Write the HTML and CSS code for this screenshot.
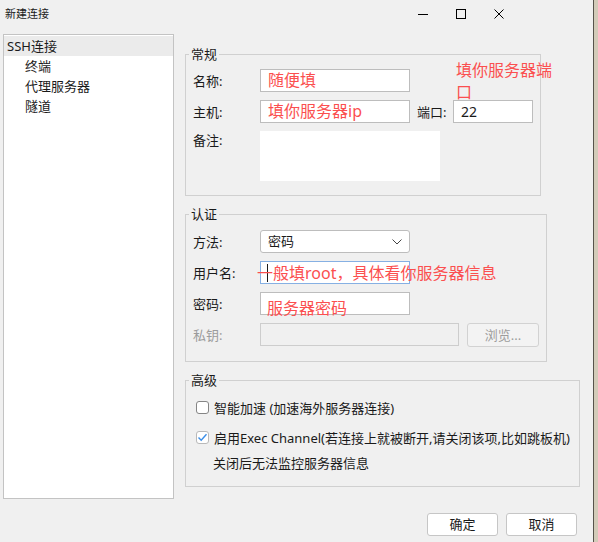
FILE: index.html
```html
<!DOCTYPE html>
<html lang="zh-CN">
<head>
<meta charset="utf-8">
<title>新建连接</title>
<link rel="stylesheet" href="styles.css">
</head>
<body>
<div class="window">
  <div class="dialog">
    <div class="titlebar">
      <span class="title">新建连接</span>
      <div class="caption">
        <span class="cap"><svg width="10" height="10" viewBox="0 0 10 10"><path d="M0 5.5H10" stroke="#000" stroke-width="1"/></svg></span>
        <span class="cap"><svg width="10" height="10" viewBox="0 0 10 10"><rect x="0.5" y="0.5" width="9" height="9" fill="none" stroke="#000" stroke-width="1"/></svg></span>
        <span class="cap"><svg width="10" height="10" viewBox="0 0 10 10"><path d="M0.5 0.5L9.5 9.5M9.5 0.5L0.5 9.5" stroke="#000" stroke-width="1"/></svg></span>
      </div>
    </div>

    <div class="body">
      <ul class="tree">
        <li class="sel">SSH连接</li>
        <li class="child">终端</li>
        <li class="child">代理服务器</li>
        <li class="child">隧道</li>
      </ul>

      <div class="pane">
        <fieldset class="group g-general">
          <legend>常规</legend>
          <div class="row rel">
            <span class="lbl">名称:</span>
            <div class="field w150 red">随便填</div>
            <span class="note note-port">填你服务器端口</span>
          </div>
          <div class="row">
            <span class="lbl">主机:</span>
            <div class="field w150 red">填你服务器ip</div>
            <span class="lbl-port">端口:</span>
            <div class="field w80 num">22</div>
          </div>
          <div class="row top">
            <span class="lbl lbl-top">备注:</span>
            <div class="memo"></div>
          </div>
        </fieldset>

        <fieldset class="group g-auth">
          <legend>认证</legend>
          <div class="row">
            <span class="lbl">方法:</span>
            <div class="field w150 select">
              <span>密码</span>
              <svg class="chev" width="10" height="6" viewBox="0 0 10 6"><path d="M0.5 0.5L5 5L9.5 0.5" fill="none" stroke="#444" stroke-width="1"/></svg>
            </div>
          </div>
          <div class="row rel">
            <span class="lbl">用户名:</span>
            <div class="field w150 focus"><span class="caret"></span></div>
            <span class="note note-user">一般填root，具体看你服务器信息</span>
          </div>
          <div class="row rel">
            <span class="lbl">密码:</span>
            <div class="field w150"></div>
            <span class="note note-pass">服务器密码</span>
          </div>
          <div class="row">
            <span class="lbl dim">私钥:</span>
            <div class="field w199 off"></div>
            <div class="btn-browse">浏览...</div>
          </div>
        </fieldset>

        <fieldset class="group g-adv">
          <legend>高级</legend>
          <label class="check">
            <span class="box"></span>
            <span>智能加速 (加速海外服务器连接)</span>
          </label>
          <label class="check second">
            <span class="box on"><svg width="11" height="11" viewBox="0 0 11 11"><path d="M1.5 5.5L4.2 8.3L9.5 2.2" fill="none" stroke="#3b8ee8" stroke-width="1.4"/></svg></span>
            <span>启用Exec Channel(若连接上就被断开,请关闭该项,比如跳板机)</span>
          </label>
          <div class="hint">关闭后无法监控服务器信息</div>
        </fieldset>
      </div>
    </div>

    <div class="footer">
      <button class="btn">确定</button>
      <button class="btn">取消</button>
    </div>
  </div>
  <div class="edge"></div>
  <div class="backdrop"></div>
</div>
</body>
</html>
```

FILE: styles.css
```css
html, body {
  margin: 0;
  padding: 0;
}

body {
  width: 598px;
  height: 542px;
  overflow: hidden;
  background: #f0f0f0;
  font-family: "Noto Sans", "Noto Sans CJK SC", sans-serif;
  font-size: 13px;
  color: #1a1a1a;
}

.window {
  display: flex;
  height: 542px;
}

.dialog {
  width: 593px;
  display: flex;
  flex-direction: column;
}

.edge {
  width: 1px;
  background: #57534b;
}

.backdrop {
  flex: 1;
  background: #d3cbb9;
}

/* title bar */
.titlebar {
  height: 34px;
  display: flex;
  align-items: flex-start;
}

.title {
  font-size: 11px;
  line-height: 14px;
  margin: 7px 0 0 5px;
}

.caption {
  margin-left: auto;
  margin-right: 75px;
  display: flex;
}

.cap {
  width: 38px;
  height: 28px;
  display: flex;
  align-items: center;
  justify-content: center;
}

/* main area */
.body {
  display: flex;
  height: 465px;
  margin-left: 3px;
}

.tree {
  box-sizing: border-box;
  width: 171px;
  height: 465px;
  margin: 0;
  padding: 1px 0 0;
  list-style: none;
  background: #fff;
  border: 1px solid #c3c3c3;
}

.tree li {
  height: 20px;
  line-height: 20px;
  padding-left: 3px;
  white-space: nowrap;
}

.tree li.sel {
  background: #ebebeb;
}

.tree li.child {
  padding-left: 21px;
}

.pane {
  margin-left: 11px;
  display: flex;
  flex-direction: column;
}

/* group boxes */
.group {
  box-sizing: border-box;
  margin: 10px 0 0;
  min-width: 0;
  border: 1px solid #d0d0d0;
  padding: 7px 7px 14px;
}

.group legend {
  padding: 0 2px;
  margin-left: -4px;
  font-size: 13px;
  line-height: 16px;
}

.g-general {
  width: 356px;
  margin-top: 12px;
  display: flex;
  flex-direction: column;
  gap: 8px;
}

.g-auth {
  width: 362px;
  padding-top: 8px;
  padding-bottom: 15px;
  display: flex;
  flex-direction: column;
  gap: 8px;
}

.g-adv {
  width: 395px;
  padding-top: 9px;
  padding-bottom: 13px;
}

.row {
  display: flex;
  align-items: center;
  height: 23px;
}

.row.top {
  align-items: flex-start;
  height: 50px;
}

.rel {
  position: relative;
}

.lbl {
  width: 67px;
  flex: none;
  white-space: nowrap;
}

.lbl-top {
  line-height: 19px;
}

.lbl.dim {
  color: #9c9c9c;
}

.lbl-port {
  width: 36px;
  margin-left: 7px;
  white-space: nowrap;
}

.field {
  box-sizing: border-box;
  height: 23px;
  border: 1px solid #bdbdbd;
  background: #fff;
  padding: 0 7px;
  line-height: 21px;
  white-space: nowrap;
}

.w150 { width: 150px; }
.w80 { width: 80px; }
.w199 { width: 199px; }

.field.red {
  color: #fb4f4f;
  font-size: 16px;
}

.field.num {
  font-size: 14px;
}

.field.select {
  border-radius: 3px;
  display: flex;
  align-items: center;
  justify-content: space-between;
}

.chev {
  margin-right: 0;
}

.field.focus {
  border-color: #86b0e3;
  padding-left: 6px;
  display: flex;
  align-items: center;
}

.caret {
  width: 1px;
  height: 18px;
  background: #1a1a1a;
}

.field.off {
  background: #f0f0f0;
  border-color: #cdcdcd;
}

.btn-browse {
  box-sizing: border-box;
  width: 72px;
  height: 24px;
  margin-left: 8px;
  border: 1px solid #d2d2d2;
  border-radius: 3px;
  background: #f3f3f3;
  color: #9d9d9d;
  text-align: center;
  line-height: 22px;
}

.memo {
  width: 180px;
  height: 50px;
  background: #fff;
}

/* red hand-written notes laid over the form */
.note {
  position: absolute;
  color: #fb4f4f;
  font-size: 16px;
  line-height: 22px;
  white-space: nowrap;
}

.note-port {
  left: 263px;
  top: -10px;
  width: 100px;
  white-space: normal;
}

.note-user {
  left: 64px;
  top: 1px;
}

.note-pass {
  left: 74px;
  top: 5px;
}

/* checkboxes */
.check {
  display: flex;
  align-items: center;
  height: 20px;
  white-space: nowrap;
}

.check.second {
  margin-top: 10px;
}

.box {
  box-sizing: border-box;
  width: 13px;
  height: 13px;
  margin: 0 5px 0 3px;
  border: 1px solid #858585;
  border-radius: 3px;
  background: #fff;
  display: flex;
  align-items: center;
  justify-content: center;
}

.box.on {
  border-color: #b9b9b9;
}

.hint {
  margin: 6px 0 0 20px;
  height: 20px;
  line-height: 20px;
}

/* dialog buttons */
.footer {
  display: flex;
  justify-content: flex-end;
  gap: 8px;
  margin-top: 14px;
  padding-right: 16px;
}

.btn {
  box-sizing: border-box;
  width: 71px;
  height: 23px;
  padding: 0;
  border: 1px solid #c6c6c6;
  border-radius: 3px;
  background: #fff;
  font: inherit;
  color: #1a1a1a;
  line-height: 21px;
}
```
